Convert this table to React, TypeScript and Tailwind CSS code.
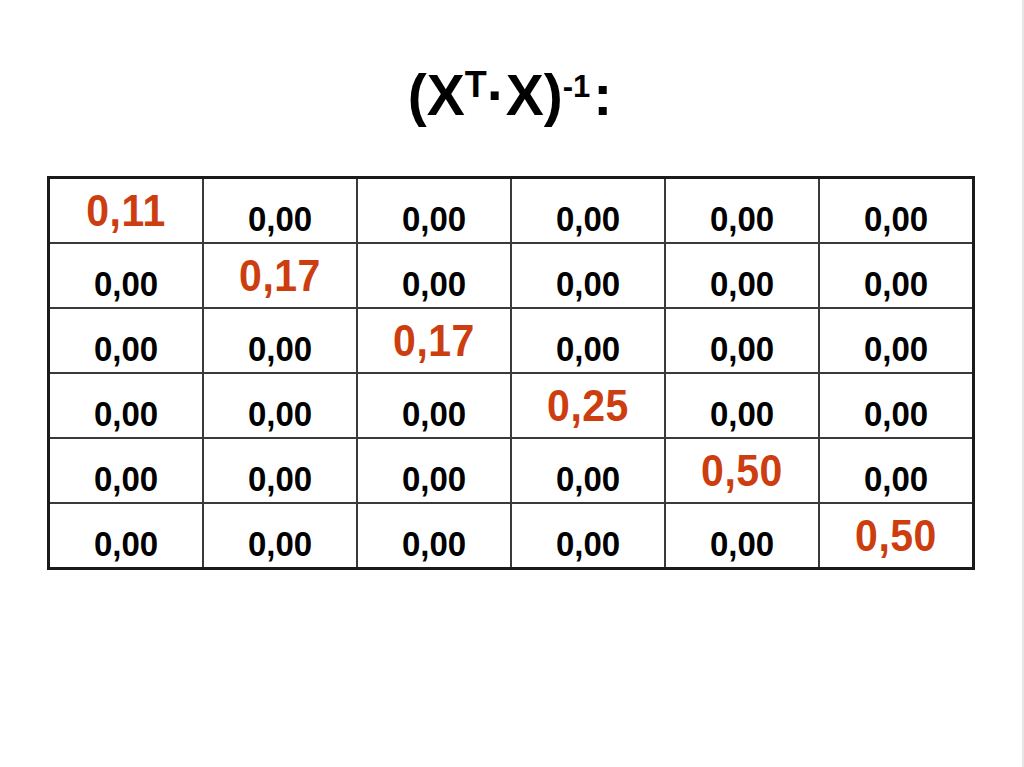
const diag = ['0,11', '0,17', '0,17', '0,25', '0,50', '0,50']

const rows = diag.map((d, r) => diag.map((_, c) => (r === c ? d : '0,00')))

export default function App() {
  return (
    <div
      className="w-[1024px] h-[767px] bg-white overflow-hidden"
      style={{ fontFamily: '"Liberation Sans", Arial, sans-serif' }}
    >
      <div className="h-full border-r-2 border-[#e6e6e6] flex flex-col items-center">
        <h1 className="mt-[67px] h-[57px] flex items-baseline justify-center text-[57px] leading-none font-bold text-black ml-[-2px]">
          <span>(X</span>
          <span className="text-[36px] leading-none relative top-[-18px]">T</span>
          <span>·X)</span>
          <span className="text-[31px] leading-none relative top-[-18px]">-1</span>
          <span className="ml-[3px]">:</span>
        </h1>

        <div className="mt-[52px] border-[3px] border-[#1a1a1a] bg-[#3a3a3a]">
          <div className="grid grid-cols-[repeat(6,152px)] auto-rows-[63px] gap-[2px]">
            {rows.map((row, r) =>
              row.map((v, c) => (
                <div key={`${r}-${c}`} className="bg-white flex items-end justify-center">
                  {r === c ? (
                    <span className="text-[41px] leading-none font-bold tracking-[0.5px] text-[#cc3d10] mb-[8px] scale-y-[1.1] origin-bottom">
                      {v}
                    </span>
                  ) : (
                    <span className="text-[33px] leading-none font-bold text-black mb-[6px] scale-y-[1.05] origin-bottom">
                      {v}
                    </span>
                  )}
                </div>
              ))
            )}
          </div>
        </div>
      </div>
    </div>
  )
}
